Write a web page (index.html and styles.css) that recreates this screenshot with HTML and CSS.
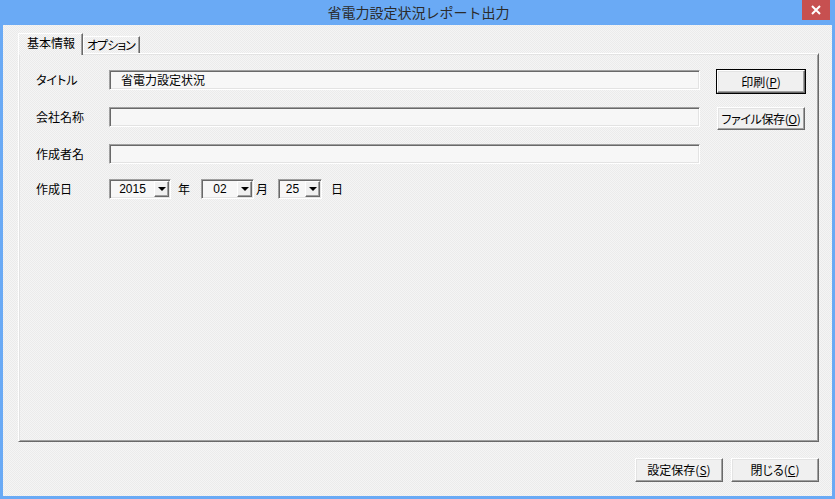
FILE: index.html
```html
<!DOCTYPE html>
<html lang="ja">
<head>
  <meta charset="UTF-8" />
  <title>省電力設定状況レポート出力</title>
  <link rel="stylesheet" href="styles.css">
</head>
<body>
  <div class="window">
    <div class="titlebar">
      <span class="title">省電力設定状況レポート出力</span>
      <span class="close">
        <svg width="10" height="10" viewBox="0 0 10 10"><path d="M1 1L9 9M9 1L1 9" stroke="#fff" stroke-width="2"/></svg>
      </span>
    </div>

    <div class="client">
      <div class="tabs">
        <div class="tab active">基本情報</div>
        <div class="tab">オプション</div>
      </div>

      <div class="panel">
        <div class="row">
          <span class="label">タイトル</span>
          <div class="field">省電力設定状況</div>
          <button class="btn side default">印刷(<u>P</u>)</button>
        </div>

        <div class="row row-company">
          <span class="label">会社名称</span>
          <div class="field"></div>
          <button class="btn side tight">ファイル保存(<u>O</u>)</button>
        </div>

        <div class="row row-author">
          <span class="label">作成者名</span>
          <div class="field"></div>
        </div>

        <div class="row row-date">
          <span class="label">作成日</span>
          <div class="combo combo-year"><span class="combo-text">2015</span><span class="drop"></span></div>
          <span class="unit unit-year">年</span>
          <div class="combo combo-month"><span class="combo-text">02</span><span class="drop"></span></div>
          <span class="unit unit-month">月</span>
          <div class="combo combo-day"><span class="combo-text">25</span><span class="drop"></span></div>
          <span class="unit unit-day">日</span>
        </div>
      </div>

      <div class="footer">
        <button class="btn foot">設定保存(<u>S</u>)</button>
        <button class="btn foot">閉じる(<u>C</u>)</button>
      </div>
    </div>
  </div>
</body>
</html>
```

FILE: styles.css
```css
/* Win8 style dialog */
body {
  margin: 0;
  padding: 0;
  font-family: "Noto Sans CJK JP", "Liberation Sans", sans-serif;
  font-size: 12px;
  font-feature-settings: "palt";
  color: #000;
}

.window {
  width: 835px;
  height: 499px;
  background: #6aaaf5;
  display: flex;
  flex-direction: column;
}

.titlebar {
  height: 25px;
  position: relative;
  display: flex;
  justify-content: center;
  align-items: center;
}

.title {
  font-size: 14px;
  font-feature-settings: normal;
  color: #2b2b2b;
  line-height: 25px;
  padding-left: 2px;
}

.close {
  position: absolute;
  top: 0;
  left: 802px;
  width: 28px;
  height: 20px;
  background: #c75050;
  display: flex;
  align-items: center;
  justify-content: center;
}

.client {
  flex: 1;
  margin: 0 3px 3px 3px;
  padding: 8px 13px 14px 15px;
  background: repeating-conic-gradient(#f5f5f5 0 25%, #ebebeb 0 50%) 0 0 / 2px 2px;
  display: flex;
  flex-direction: column;
}

/* tabs */
.tabs {
  display: flex;
  align-items: flex-end;
  height: 20px;
}

.tab {
  box-sizing: border-box;
  border-top: 1px solid #fff;
  border-left: 1px solid #fff;
  border-right: 1px solid #696969;
  box-shadow: inset -1px 0 0 #a0a0a0;
  height: 17px;
  line-height: 15px;
  padding: 0 4px 0 3px;
  letter-spacing: -1px;
  white-space: nowrap;
}

.tab.active {
  position: relative;
  z-index: 1;
  width: 65px;
  height: 22px;
  margin-bottom: -2px;
  line-height: 18px;
  padding: 0 0 0 8px;
  letter-spacing: 0;
  background: repeating-conic-gradient(#f5f5f5 0 25%, #ebebeb 0 50%) 0 0 / 2px 2px;
}

/* panel */
.panel {
  box-sizing: border-box;
  height: 389px;
  border: 1px solid;
  border-color: #fff #696969 #696969 #fff;
  box-shadow: inset 1px 1px 0 #e3e3e3, inset -1px -1px 0 #a0a0a0;
  padding: 16px 0 0 17px;
}

.row {
  display: flex;
  align-items: flex-start;
}

.row-company { margin-top: 14px; }
.row-author { margin-top: 14px; }
.row-date { margin-top: 15px; }

.label {
  width: 73px;
  height: 20px;
  line-height: 20px;
}

.field {
  box-sizing: border-box;
  width: 591px;
  height: 20px;
  background: #f7f7f7;
  border: 1px solid;
  border-color: #a0a0a0 #fff #fff #a0a0a0;
  box-shadow: inset 1px 1px 0 #696969, inset -1px -1px 0 #e3e3e3;
  padding-left: 11px;
  line-height: 18px;
}

/* buttons */
.btn {
  box-sizing: border-box;
  font-family: inherit;
  font-size: 12px;
  font-feature-settings: "palt";
  color: #000;
  background: #f0f0f0;
  border: 1px solid;
  border-color: #fff #696969 #696969 #fff;
  box-shadow: inset -1px -1px 0 #a0a0a0, inset 1px 1px 0 #e3e3e3;
  padding: 0;
  width: 88px;
  height: 24px;
  line-height: 20px;
  white-space: nowrap;
}

.btn u {
  text-underline-offset: 1px;
}

.btn.side {
  margin-left: 17px;
  height: 23px;
}

.btn.tight {
  letter-spacing: -0.4px;
}

.btn.default {
  outline: 1px solid #000;
  outline-offset: 0;
}

.footer {
  margin-top: 16px;
  display: flex;
  justify-content: flex-end;
  gap: 8px;
}

/* date combos */
.combo {
  box-sizing: border-box;
  height: 20px;
  display: flex;
  background: #f7f7f7;
  border: 1px solid;
  border-color: #a0a0a0 #fff #fff #a0a0a0;
  box-shadow: inset 1px 1px 0 #696969, inset -1px -1px 0 #e3e3e3;
  padding: 1px;
}

.combo-year { width: 62px; }
.combo-month { width: 53px; margin-left: 11px; }
.combo-day { width: 44px; margin-left: 10px; }

.combo-text {
  flex: 1;
  text-align: center;
  line-height: 16px;
  font-family: "Liberation Sans", sans-serif;
}

.drop {
  box-sizing: border-box;
  width: 15px;
  height: 16px;
  background: #f0f0f0;
  border: 1px solid;
  border-color: #fff #696969 #696969 #fff;
  box-shadow: inset -1px -1px 0 #a0a0a0;
  display: flex;
  align-items: center;
  justify-content: center;
}

.drop::after {
  content: "";
  border-left: 4px solid transparent;
  border-right: 4px solid transparent;
  border-top: 4px solid #000;
}

.unit {
  height: 20px;
  line-height: 20px;
}

.unit-year { margin-left: 7px; }
.unit-month { margin-left: 2px; }
.unit-day { margin-left: 9px; }
```
